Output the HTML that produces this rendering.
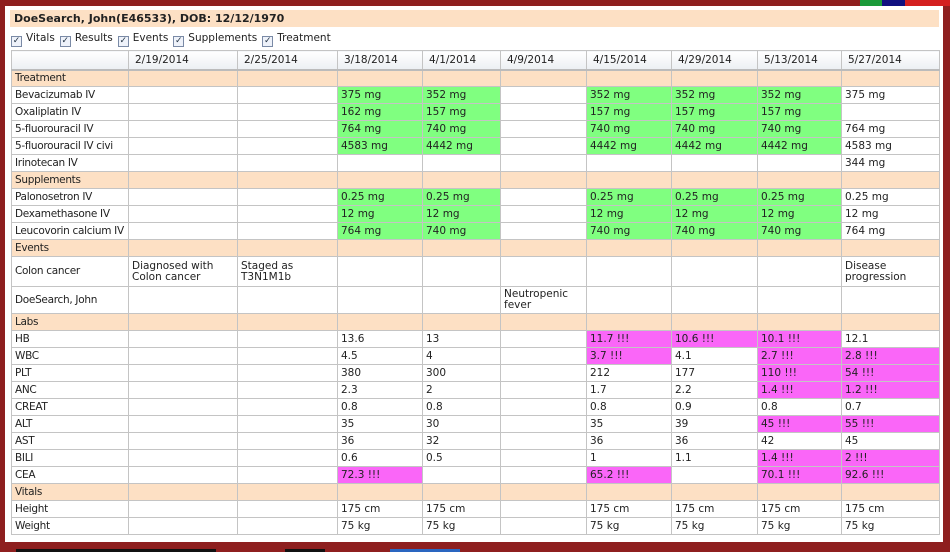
<!DOCTYPE html>
<html><head><meta charset="utf-8"><style>
*{margin:0;padding:0;box-sizing:border-box}
body{width:950px;height:552px;background:#8e1f1f;position:relative;overflow:hidden;font-family:"DejaVu Sans","Liberation Sans",sans-serif;font-size:10.5px;color:#222}
.panel{position:absolute;left:5px;top:6px;width:938px;height:536px;background:#fff}
.title{position:absolute;left:10px;top:10px;width:929px;height:17px;background:#fde0c4;font-weight:bold;font-size:11px;padding:2px 4px;line-height:13px}
.checks{position:absolute;left:11px;top:31px;font-size:10.5px;line-height:14px;white-space:nowrap}
.cb{display:inline-block;width:11px;height:11px;border:1px solid #7a8aa6;background:#eef2fa;vertical-align:-2px;margin-right:4px;font-size:9px;line-height:9px;text-align:center;color:#234;font-style:normal}
.checks span{margin-right:5px}
table{position:absolute;left:11px;top:50px;border-collapse:collapse;table-layout:fixed;width:928px;border:1px solid #888}
td{border:1px solid #c4c4c4;padding:0 3px;height:17px;line-height:11px;white-space:nowrap;overflow:hidden}
td:first-child{letter-spacing:-0.3px;padding-right:0}
tr.h td{height:19px;background:linear-gradient(#fff,#eceff3);padding:2px 0 0 6px;border-bottom:2px solid #bbb}
tr.s td{background:#fde0c4}
tr.t td{height:30px;white-space:normal;vertical-align:middle}
tr.t2 td{height:27px}
.g{background:#80ff80}.m{background:#fa66f8}
.bar{position:absolute;top:0;height:6px}
</style></head><body>
<div class="bar" style="left:860px;width:22px;background:#1a9a3a"></div>
<div class="bar" style="left:882px;width:23px;background:#101080"></div>
<div class="bar" style="left:905px;width:45px;background:#d42020"></div>
<div class="panel"></div>
<div class="title">DoeSearch, John(E46533), DOB: 12/12/1970</div>
<div class="checks"><span><i class="cb">✓</i>Vitals</span><span><i class="cb">✓</i>Results</span><span><i class="cb">✓</i>Events</span><span><i class="cb">✓</i>Supplements</span><span><i class="cb">✓</i>Treatment</span></div>
<table>
<colgroup><col style="width:117px"><col style="width:109px"><col style="width:100px"><col style="width:85px"><col style="width:78px"><col style="width:86px"><col style="width:85px"><col style="width:86px"><col style="width:84px"><col style="width:98px"></colgroup>
<tr class="h"><td></td><td>2/19/2014</td><td>2/25/2014</td><td>3/18/2014</td><td>4/1/2014</td><td>4/9/2014</td><td>4/15/2014</td><td>4/29/2014</td><td>5/13/2014</td><td>5/27/2014</td></tr>
<tr class="s"><td>Treatment</td><td></td><td></td><td></td><td></td><td></td><td></td><td></td><td></td><td></td></tr>
<tr><td>Bevacizumab IV</td><td></td><td></td><td class="g">375 mg</td><td class="g">352 mg</td><td></td><td class="g">352 mg</td><td class="g">352 mg</td><td class="g">352 mg</td><td>375 mg</td></tr>
<tr><td>Oxaliplatin IV</td><td></td><td></td><td class="g">162 mg</td><td class="g">157 mg</td><td></td><td class="g">157 mg</td><td class="g">157 mg</td><td class="g">157 mg</td><td></td></tr>
<tr><td>5-fluorouracil IV</td><td></td><td></td><td class="g">764 mg</td><td class="g">740 mg</td><td></td><td class="g">740 mg</td><td class="g">740 mg</td><td class="g">740 mg</td><td>764 mg</td></tr>
<tr><td>5-fluorouracil IV civi</td><td></td><td></td><td class="g">4583 mg</td><td class="g">4442 mg</td><td></td><td class="g">4442 mg</td><td class="g">4442 mg</td><td class="g">4442 mg</td><td>4583 mg</td></tr>
<tr><td>Irinotecan IV</td><td></td><td></td><td></td><td></td><td></td><td></td><td></td><td></td><td>344 mg</td></tr>
<tr class="s"><td>Supplements</td><td></td><td></td><td></td><td></td><td></td><td></td><td></td><td></td><td></td></tr>
<tr><td>Palonosetron IV</td><td></td><td></td><td class="g">0.25 mg</td><td class="g">0.25 mg</td><td></td><td class="g">0.25 mg</td><td class="g">0.25 mg</td><td class="g">0.25 mg</td><td>0.25 mg</td></tr>
<tr><td>Dexamethasone IV</td><td></td><td></td><td class="g">12 mg</td><td class="g">12 mg</td><td></td><td class="g">12 mg</td><td class="g">12 mg</td><td class="g">12 mg</td><td>12 mg</td></tr>
<tr><td>Leucovorin calcium IV</td><td></td><td></td><td class="g">764 mg</td><td class="g">740 mg</td><td></td><td class="g">740 mg</td><td class="g">740 mg</td><td class="g">740 mg</td><td>764 mg</td></tr>
<tr class="s"><td>Events</td><td></td><td></td><td></td><td></td><td></td><td></td><td></td><td></td><td></td></tr>
<tr class="t"><td>Colon cancer</td><td>Diagnosed with Colon cancer</td><td>Staged as T3N1M1b</td><td></td><td></td><td></td><td></td><td></td><td></td><td>Disease progression</td></tr>
<tr class="t t2"><td>DoeSearch, John</td><td></td><td></td><td></td><td></td><td>Neutropenic fever</td><td></td><td></td><td></td><td></td></tr>
<tr class="s"><td>Labs</td><td></td><td></td><td></td><td></td><td></td><td></td><td></td><td></td><td></td></tr>
<tr><td>HB</td><td></td><td></td><td>13.6</td><td>13</td><td></td><td class="m">11.7 !!!</td><td class="m">10.6 !!!</td><td class="m">10.1 !!!</td><td>12.1</td></tr>
<tr><td>WBC</td><td></td><td></td><td>4.5</td><td>4</td><td></td><td class="m">3.7 !!!</td><td>4.1</td><td class="m">2.7 !!!</td><td class="m">2.8 !!!</td></tr>
<tr><td>PLT</td><td></td><td></td><td>380</td><td>300</td><td></td><td>212</td><td>177</td><td class="m">110 !!!</td><td class="m">54 !!!</td></tr>
<tr><td>ANC</td><td></td><td></td><td>2.3</td><td>2</td><td></td><td>1.7</td><td>2.2</td><td class="m">1.4 !!!</td><td class="m">1.2 !!!</td></tr>
<tr><td>CREAT</td><td></td><td></td><td>0.8</td><td>0.8</td><td></td><td>0.8</td><td>0.9</td><td>0.8</td><td>0.7</td></tr>
<tr><td>ALT</td><td></td><td></td><td>35</td><td>30</td><td></td><td>35</td><td>39</td><td class="m">45 !!!</td><td class="m">55 !!!</td></tr>
<tr><td>AST</td><td></td><td></td><td>36</td><td>32</td><td></td><td>36</td><td>36</td><td>42</td><td>45</td></tr>
<tr><td>BILI</td><td></td><td></td><td>0.6</td><td>0.5</td><td></td><td>1</td><td>1.1</td><td class="m">1.4 !!!</td><td class="m">2 !!!</td></tr>
<tr><td>CEA</td><td></td><td></td><td class="m">72.3 !!!</td><td></td><td></td><td class="m">65.2 !!!</td><td></td><td class="m">70.1 !!!</td><td class="m">92.6 !!!</td></tr>
<tr class="s"><td>Vitals</td><td></td><td></td><td></td><td></td><td></td><td></td><td></td><td></td><td></td></tr>
<tr><td>Height</td><td></td><td></td><td>175 cm</td><td>175 cm</td><td></td><td>175 cm</td><td>175 cm</td><td>175 cm</td><td>175 cm</td></tr>
<tr><td>Weight</td><td></td><td></td><td>75 kg</td><td>75 kg</td><td></td><td>75 kg</td><td>75 kg</td><td>75 kg</td><td>75 kg</td></tr>
</table>
<div style="position:absolute;left:16px;top:549px;width:200px;height:3px;background:#111"></div>
<div style="position:absolute;left:285px;top:549px;width:40px;height:3px;background:#111"></div>
<div style="position:absolute;left:390px;top:549px;width:70px;height:3px;background:#2a66c0"></div>
</body></html>
